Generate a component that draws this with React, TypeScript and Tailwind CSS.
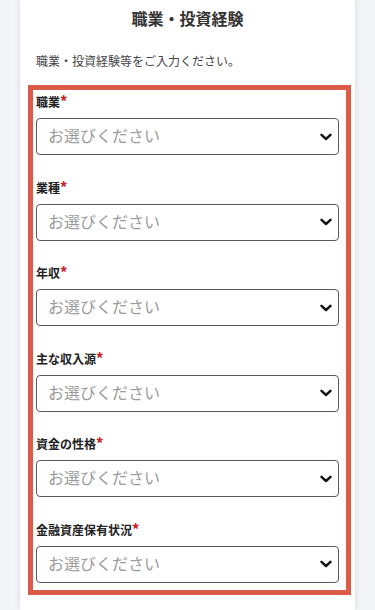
import React from "react";

const fields = ["職業", "業種", "年収", "主な収入源", "資金の性格", "金融資産保有状況"];

function Chevron() {
  return (
    <svg width="12" height="8" viewBox="0 0 12 8" className="shrink-0">
      <path d="M1.5 1.8 L6 6 L10.5 1.8" fill="none" stroke="#111" strokeWidth="2.4" strokeLinecap="round" strokeLinejoin="round" />
    </svg>
  );
}

export default function App() {
  return (
    <div
      className="min-h-[610px] w-[375px] bg-[#f3f5f9] overflow-hidden"
      style={{ fontFamily: '"Noto Sans CJK JP", "Noto Sans", sans-serif' }}
    >
      <div className="mx-[20px] min-h-[610px] bg-white shadow-[0_0_6px_rgba(0,0,0,0.12)] pt-[6px]">
        <h1 className="text-center text-[16px] leading-[24px] font-bold text-[#333]">職業・投資経験</h1>
        <p className="mt-[24px] pl-[16px] text-[12px] leading-[14px] text-[#444]">職業・投資経験等をご入力ください。</p>
        <div className="mt-[17px] ml-[8px] mr-[4px] border-[5px] border-[#dc5a48] pl-[3px] pr-[7px] pt-[5px] pb-[7px] flex flex-col gap-[25.6px]">
          {fields.map((f) => (
            <div key={f} className="flex flex-col gap-[9px]">
              <div className="flex items-start text-[12px] leading-[14px] font-bold text-[#222]">
                <span>{f}</span>
                <span className="text-[#c62828] text-[14px] leading-[10px] font-black">*</span>
              </div>
              <div className="flex h-[37px] items-center justify-between rounded-[4px] border border-[#5a5a5a] bg-white pl-[11px] pr-[6px]">
                <span className="text-[16px] leading-[20px] text-[#9b9b9b] -mt-[3px]">お選びください</span>
                <Chevron />
              </div>
            </div>
          ))}
        </div>
      </div>
    </div>
  );
}
